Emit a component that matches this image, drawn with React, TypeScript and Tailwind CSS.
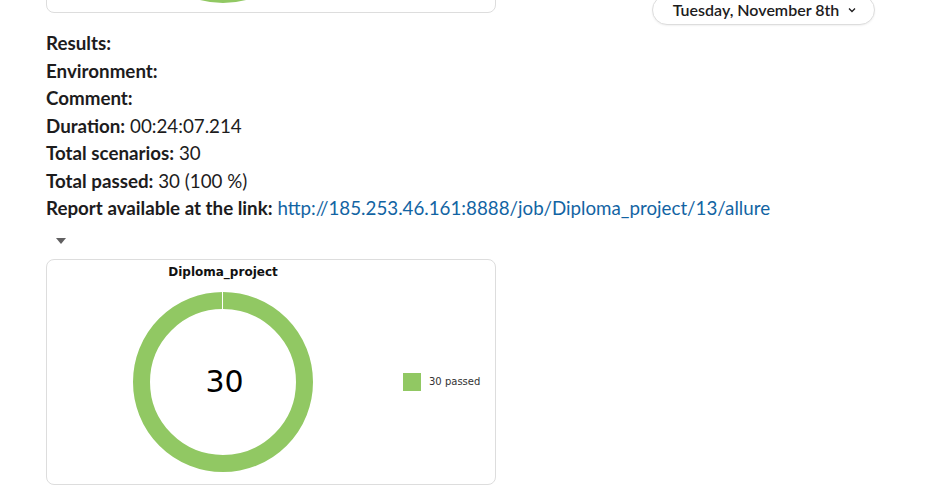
import React from "react";

const GREEN = "#91c863";

function Donut({ label = true }: { label?: boolean }) {
  return (
    <div className="relative w-[182px] h-[182px]">
      <svg width="182" height="182" viewBox="0 0 182 182" className="block">
        <circle cx="91" cy="91" r="81.5" fill="none" stroke={GREEN} strokeWidth="17" />
        <line x1="90.5" y1="0" x2="90.5" y2="19" stroke="#ffffff" strokeWidth="1" />
      </svg>
      {label && (
        <div className="absolute inset-0 flex items-center justify-center pl-[3px] text-[30px] text-black font-['DejaVu_Sans',sans-serif] leading-none">
          30
        </div>
      )}
    </div>
  );
}

function ChartCard({ className = "", texts = true }: { className?: string; texts?: boolean }) {
  return (
    <div
      className={`w-[450px] h-[226px] rounded-[8px] border border-[#dddddd] bg-white flex items-start ${className}`}
    >
      <div className="ml-[85px] flex flex-col items-center">
        <div className="mt-[4px] h-[16px] text-[12px] leading-[16px] font-bold text-[#111] font-['DejaVu_Sans',sans-serif]">
          {texts ? "Diploma_project" : ""}
        </div>
        <div className={texts ? "mt-[11px]" : "mt-[14px]"}>
          <Donut label={texts} />
        </div>
      </div>
      {texts && (
        <div className="ml-[89px] mt-[113px] flex items-center gap-[8px]">
          <div className="w-[18px] h-[18px]" style={{ backgroundColor: GREEN }} />
          <span className="text-[10px] text-[#333] font-['DejaVu_Sans',sans-serif]">30 passed</span>
        </div>
      )}
    </div>
  );
}

export default function App() {
  return (
    <div className="relative w-[939px] h-[503px] overflow-hidden bg-white font-['Lato',sans-serif] text-[#1d1c1d]">
      <div className="pl-[46px]">
        <ChartCard className="-mt-[213px]" texts={false} />
        <div className="mt-[16px] text-[18.75px] leading-[27.5px]">
          <div><b className="font-bold">Results:</b></div>
          <div><b className="font-bold">Environment:</b></div>
          <div><b className="font-bold">Comment:</b></div>
          <div><b className="font-bold">Duration:</b> 00:24:07.214</div>
          <div><b className="font-bold">Total scenarios:</b> 30</div>
          <div><b className="font-bold">Total passed:</b> 30 (100 %)</div>
          <div>
            <b className="font-bold">Report available at the link:</b>{" "}
            <span className="text-[#1264a3]">http://185.253.46.161:8888/job/Diploma_project/13/allure</span>
          </div>
        </div>
        <div className="h-[37px] flex items-start pt-[16px] pl-[10px]">
          <svg width="10" height="6" viewBox="0 0 10 6" className="block">
            <path d="M0 0 L10 0 L5 6 Z" fill="#616061" />
          </svg>
        </div>
        <ChartCard />
      </div>

      <div className="absolute left-[652px] top-[-5px] w-[223px] h-[30px] rounded-full border border-[#dddddd] bg-white shadow-[0_1px_2px_rgba(0,0,0,0.06)] flex items-center justify-center gap-[9px] pl-[2px]">
        <span className="text-[16px] font-semibold text-[#1d1c1d]">Tuesday, November 8th</span>
        <svg width="8" height="6" viewBox="0 0 8 6" className="block">
          <path d="M1 1.5 L4 4.5 L7 1.5" fill="none" stroke="#1d1c1d" strokeWidth="1.3" />
        </svg>
      </div>
    </div>
  );
}
